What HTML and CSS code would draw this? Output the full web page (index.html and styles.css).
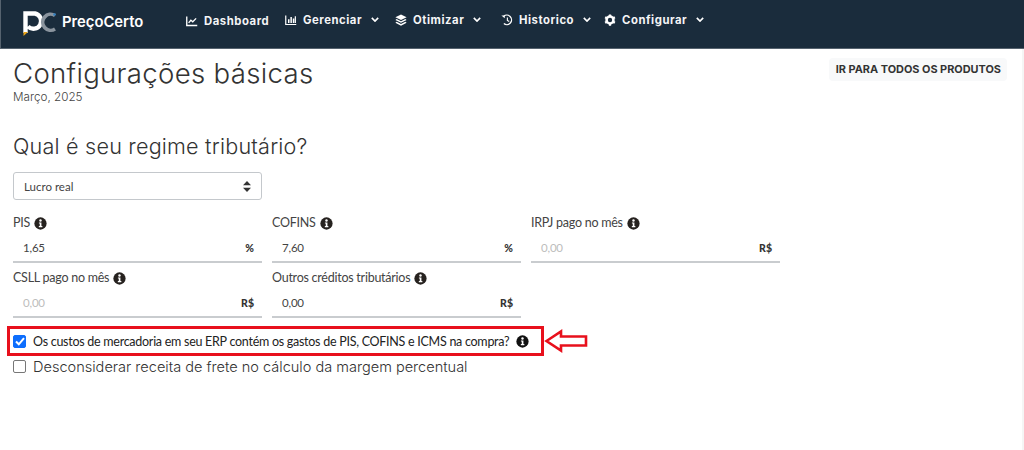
FILE: index.html
```html
<!DOCTYPE html>
<html lang="pt-BR">
	<head>
		<meta charset="UTF-8" />
		<meta name="viewport" content="width=device-width, initial-scale=1.0" />
		<title>PreçoCerto</title>
		<link rel="stylesheet" href="styles.css">
	</head>
	<body>
		<nav class="navbar">
			<a class="brand">
				<svg class="brand-logo" width="33" height="25" viewBox="0 0 33 25" fill="none">
					<path d="M2.5 22V2.5H12A7.7 7.7 0 1 1 5 15.5" stroke="#fff" stroke-width="4.4" />
					<path d="M32 4.5A8 8 0 1 0 32 18" stroke="#8a949e" stroke-width="3.6" />
					<path d="M0.5 25V21L5 21Z" fill="#e8a317" />
					<circle cx="31.5" cy="3.5" r="1.3" fill="#2f7fc1" />
				</svg>
				<span class="brand-name">PreçoCerto</span>
			</a>
			<ul class="nav-links">
				<li class="nav-item nav-dashboard">
					<svg class="nav-icon" viewBox="0 0 16 16"><path d="M1 2V14H15" stroke="#fff" stroke-width="1.8" fill="none" /><path d="M3.5 10.5L6.5 7L9 9L13.5 4.5" stroke="#fff" stroke-width="1.8" fill="none" /></svg>
					Dashboard
				</li>
				<li class="nav-item nav-gerenciar">
					<svg class="nav-icon" viewBox="0 0 16 16"><path d="M1 2V14H15" stroke="#fff" stroke-width="1.6" fill="none" /><path d="M4 7h2v5H4zM7.2 4h2v8h-2zM10.4 6h2v6h-2zM13 3h1.6v9H13z" fill="#fff" /></svg>
					Gerenciar
					<svg class="caret" viewBox="0 0 10 6"><path d="M1 1L5 5L9 1" /></svg>
				</li>
				<li class="nav-item nav-otimizar">
					<svg class="nav-icon" viewBox="0 0 16 16"><path d="M8 0.5L15.5 4.3L8 8L0.5 4.3Z" fill="#fff" /><path d="M2.2 6.6L8 9.6L13.8 6.6L15.5 8L8 11.8L0.5 8Z" fill="#fff" /><path d="M2.2 10.4L8 13.3L13.8 10.4L15.5 11.8L8 15.5L0.5 11.8Z" fill="#fff" /></svg>
					Otimizar
					<svg class="caret" viewBox="0 0 10 6"><path d="M1 1L5 5L9 1" /></svg>
				</li>
				<li class="nav-item nav-historico">
					<svg class="nav-icon" viewBox="0 0 16 16"><path d="M3.5 3.2A6.3 6.3 0 1 1 3.8 12.8" stroke="#fff" stroke-width="1.7" fill="none" /><path d="M0.5 2H5V5.5Z" fill="#fff" /><path d="M8.5 4.5V8.5L11 10" stroke="#fff" stroke-width="1.5" fill="none" /></svg>
					Historico
					<svg class="caret" viewBox="0 0 10 6"><path d="M1 1L5 5L9 1" /></svg>
				</li>
				<li class="nav-item">
					<svg class="nav-icon" viewBox="0 0 16 16"><circle cx="8" cy="8" r="4.6" fill="none" stroke="#fff" stroke-width="3.4" /><path d="M8 0.5V15.5M1.5 4.25L14.5 11.75M14.5 4.25L1.5 11.75" stroke="#fff" stroke-width="3" stroke-dasharray="3 9 3" /></svg>
					Configurar
					<svg class="caret" viewBox="0 0 10 6"><path d="M1 1L5 5L9 1" /></svg>
				</li>
			</ul>
		</nav>

		<main class="content">
			<header class="page-head">
				<div>
					<h1>Configurações básicas</h1>
					<p class="subtitle">Março, 2025</p>
				</div>
				<a class="btn-products">IR PARA TODOS OS PRODUTOS</a>
			</header>

			<h2>Qual é seu regime tributário?</h2>

			<div class="select">
				<span>Lucro real</span>
				<svg width="8" height="11" viewBox="0 0 8 11"><path d="M4 0L8 4.2H0ZM4 11L0 6.8H8Z" fill="#333" /></svg>
			</div>

			<section class="fields">
				<div class="field">
					<label>PIS <svg class="info"><use href="#info" /></svg></label>
					<div class="input"><span>1,65</span><b>%</b></div>
				</div>
				<div class="field">
					<label>COFINS <svg class="info"><use href="#info" /></svg></label>
					<div class="input"><span>7,60</span><b>%</b></div>
				</div>
				<div class="field">
					<label>IRPJ pago no mês <svg class="info"><use href="#info" /></svg></label>
					<div class="input"><span class="placeholder">0,00</span><b>R$</b></div>
				</div>
				<div class="field">
					<label>CSLL pago no mês <svg class="info"><use href="#info" /></svg></label>
					<div class="input"><span class="placeholder">0,00</span><b>R$</b></div>
				</div>
				<div class="field">
					<label>Outros créditos tributários <svg class="info"><use href="#info" /></svg></label>
					<div class="input"><span>0,00</span><b>R$</b></div>
				</div>
			</section>

			<div class="highlight-row">
				<div class="highlight">
					<span class="check checked">
						<svg width="10" height="9" viewBox="0 0 10 9"><path d="M1 4.5L3.8 7.3L9 1.2" stroke="#fff" stroke-width="2" fill="none" /></svg>
					</span>
					<span class="highlight-text">Os custos de mercadoria em seu ERP contém os gastos de PIS, COFINS e ICMS na compra?</span>
					<svg class="info info-black"><use href="#info" /></svg>
				</div>
				<svg class="arrow" width="44" height="24" viewBox="0 0 44 24"><path d="M2.5 12L17 2.5V7.5H42V16.5H17V21.5Z" fill="#fff" stroke="#e8101c" stroke-width="2.6" /></svg>
			</div>

			<div class="check-row">
				<span class="check"></span>
				<span class="check-label">Desconsiderar receita de frete no cálculo da margem percentual</span>
			</div>
		</main>

		<svg width="0" height="0" class="defs">
			<symbol id="info" viewBox="0 0 14 14">
				<circle cx="7" cy="7" r="6.6" fill="currentColor" />
				<circle cx="7" cy="3.8" r="1.3" fill="#fff" />
				<path d="M5.3 5.9H8V9.8H9V11H5.2V9.8H6.2V7.1H5.3Z" fill="#fff" />
			</symbol>
		</svg>
	</body>
</html>
```

FILE: styles.css
```css
:root {
	--navy: #1a2c3c;
	--text: #3c3c3c;
	--line: #c9cccf;
	--red: #e8101c;
}

* {
	box-sizing: border-box;
	margin: 0;
	padding: 0;
}

body {
	font-family: "Lato", "Liberation Sans", sans-serif;
	background: #fff;
	color: var(--text);
	height: 450px;
	overflow: hidden;
}

.navbar {
	height: 49px;
	background: var(--navy);
	border-bottom: 1px solid #56636f;
	border-left: 1px solid #56636f;
	display: flex;
	align-items: center;
	padding-left: 22px;
}

.brand {
	display: flex;
	align-items: center;
	width: 163px;
}

.brand-logo {
	margin-top: -1px;
}

.brand-name {
	font-family: "Inter", sans-serif;
	font-size: 14.8px;
	font-weight: 600;
	color: #fff;
	margin-left: 6px;
	margin-top: -5px;
}

.nav-links {
	display: flex;
	list-style: none;
	margin-top: -9px;
}

.nav-item {
	display: flex;
	align-items: center;
	font-family: "Inter", sans-serif;
	font-size: 11.3px;
	font-weight: 700;
	letter-spacing: 0.55px;
	color: #f4f5f6;
}

.nav-dashboard {
	width: 99px;
	margin-top: 3px;
}

.nav-gerenciar {
	width: 110px;
}

.nav-otimizar {
	width: 106px;
}

.nav-historico {
	width: 103px;
}

.nav-icon {
	width: 12px;
	height: 12px;
	margin-right: 6px;
}

.caret {
	width: 8px;
	height: 5px;
	margin-left: 9px;
	fill: none;
	stroke: #fff;
	stroke-width: 2;
}

.content {
	padding: 0 15px 0 13px;
	height: 401px;
	border-right: 2px solid #f5f5f5;
}

.page-head {
	display: flex;
	justify-content: space-between;
	align-items: flex-start;
}

h1 {
	font-family: "Inter", sans-serif;
	font-size: 27.6px;
	font-weight: 300;
	line-height: 34px;
	margin-top: 7px;
	letter-spacing: 0.3px;
	color: #333;
}

.subtitle {
	font-family: "Inter", sans-serif;
	font-size: 11.7px;
	font-weight: 300;
	line-height: 14px;
	color: #444;
}

.btn-products {
	font-family: "Inter", sans-serif;
	font-size: 10.9px;
	font-weight: 700;
	color: #333;
	background: #f8f9fa;
	border-radius: 4px;
	padding: 5px 6px 5px 7px;
	line-height: 13px;
	margin-top: 9px;
	height: 23px;
	white-space: nowrap;
}

h2 {
	font-family: "Inter", sans-serif;
	font-size: 21.6px;
	font-weight: 300;
	line-height: 26px;
	margin-top: 29px;
	letter-spacing: 0.2px;
	color: #333;
}

.select {
	width: 249px;
	height: 28px;
	margin-top: 13px;
	border: 1px solid #c4c8cc;
	border-radius: 3px;
	display: flex;
	justify-content: space-between;
	align-items: center;
	padding: 0 10px;
	font-size: 11.5px;
	color: #444;
}

.fields {
	display: grid;
	grid-template-columns: repeat(3, 249px);
	column-gap: 10px;
	row-gap: 6px;
	margin-top: 14px;
}

.field label {
	display: flex;
	align-items: center;
	gap: 4px;
	font-size: 12.5px;
	letter-spacing: -0.25px;
	line-height: 18px;
	color: #444;
}

.info {
	width: 13px;
	height: 13px;
	color: #26221f;
}

.input {
	height: 29px;
	margin-top: 2px;
	border-bottom: 2px solid var(--line);
	display: flex;
	justify-content: space-between;
	align-items: center;
	padding: 0 8px 0 10px;
	font-size: 11.5px;
	letter-spacing: -0.2px;
	color: #444;
}

.input b {
	font-size: 10.5px;
	font-weight: 900;
	letter-spacing: 0;
	color: #333;
}

.placeholder {
	color: #bdbdbd;
}

.highlight-row {
	display: flex;
	align-items: center;
	margin: 8px 0 0 -6px;
}

.highlight {
	width: 537px;
	height: 30px;
	border: 3px solid var(--red);
	display: flex;
	align-items: center;
	padding-left: 3px;
}

.highlight-text {
	font-size: 12.5px;
	letter-spacing: -0.27px;
	color: #222;
	margin-left: 7px;
	white-space: nowrap;
}

.info-black {
	color: #111;
	margin-left: 7px;
}

.arrow {
	margin-left: 0;
}

.check {
	width: 13px;
	height: 13px;
	border: 1px solid #777;
	border-radius: 2px;
	background: #fff;
	display: flex;
	align-items: center;
	justify-content: center;
	flex-shrink: 0;
}

.check.checked {
	background: #0d6efd;
	border-color: #0d6efd;
}

.check-row {
	display: flex;
	align-items: center;
	margin-top: 1px;
	height: 19px;
}

.check-label {
	font-family: "Inter", sans-serif;
	font-size: 14.55px;
	font-weight: 300;
	color: #333;
	margin-left: 7px;
	white-space: nowrap;
}

.defs {
	position: absolute;
}
```
